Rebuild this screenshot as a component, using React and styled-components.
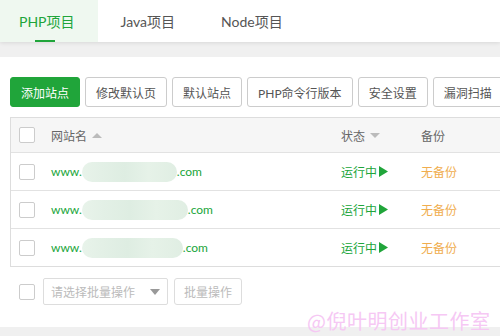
import React from "react";
import styled, { createGlobalStyle } from "styled-components";

const Global = createGlobalStyle`
  html, body { margin: 0; padding: 0; background: #f0f0f0; overflow: hidden; }
  body { font-family: "Lato", "Noto Sans CJK SC", sans-serif; }
  #root { width: 500px; height: 336px; overflow: hidden; position: relative; }
`;

const Page = styled.div`
  width: 500px;
  height: 336px;
  background: #f0f0f0;
  display: flex;
  flex-direction: column;
  position: relative;
  overflow: hidden;
`;

const TabBar = styled.div`
  height: 42px;
  background: #fff;
  display: flex;
  flex: none;
  box-shadow: 0 1px 4px rgba(0, 0, 0, 0.1);
  position: relative;
  z-index: 1;
`;

const TabList = styled.div`
  display: flex;
  margin-left: -4px;
`;

const Tab = styled.div`
  position: relative;
  padding: 0 23px;
  display: flex;
  align-items: center;
  font-size: 14px;
  color: ${(p) => (p.$active ? "#20a53a" : "#555")};
  background: ${(p) => (p.$active ? "#eff8f0" : "transparent")};
  &::after {
    content: "";
    display: ${(p) => (p.$active ? "block" : "none")};
    position: absolute;
    left: 39px;
    width: 20px;
    bottom: 0;
    height: 2px;
    background: #20a53a;
  }
`;

const Panel = styled.div`
  margin-top: 15px;
  background: #fff;
  width: 640px;
  height: 270px;
  box-sizing: border-box;
  padding: 20px 10px 0;
  display: flex;
  flex-direction: column;
  gap: 10px;
`;

const Toolbar = styled.div`
  display: flex;
  gap: 5px;
`;

const Button = styled.button`
  height: 30px;
  padding: 0 10px;
  box-sizing: border-box;
  font: inherit;
  font-size: 12px;
  border-radius: 3px;
  border: 1px solid ${(p) => (p.$primary ? "#20a53a" : "#ccc")};
  background: ${(p) => (p.$primary ? "#20a53a" : "#fff")};
  color: ${(p) => (p.$primary ? "#fff" : "#555")};
  white-space: nowrap;
  flex: none;
  cursor: pointer;
`;

const Table = styled.div`
  border: 1px solid #ddd;
  display: flex;
  flex-direction: column;
`;

const Row = styled.div`
  display: grid;
  grid-template-columns: 40px 290px 80px 1fr;
  align-items: center;
  height: ${(p) => (p.$head ? "34px" : "37px")};
  background: ${(p) => (p.$head ? "#f6f6f6" : "#fff")};
  border-bottom: 1px solid #e2e2e2;
  font-size: 12px;
  color: ${(p) => (p.$head ? "#666" : "#555")};
  &:last-child { border-bottom: none; }
`;

const Check = styled.span`
  display: block;
  width: 14px;
  height: 14px;
  border: 1px solid #ccc;
  border-radius: 2px;
  background: #fff;
  margin-left: 8px;
`;

const HeadCell = styled.div`
  display: flex;
  align-items: center;
  gap: 5px;
`;

const Sort = styled.span`
  width: 0;
  height: 0;
  border-left: 5px solid transparent;
  border-right: 5px solid transparent;
  ${(p) =>
    p.$up
      ? "border-bottom: 5px solid #bbb;"
      : "border-top: 5px solid #bbb;"}
`;

const Site = styled.div`
  display: flex;
  align-items: center;
  color: #20a53a;
`;

const Blur = styled.span`
  display: inline-block;
  height: 20px;
  border-radius: 10px;
  background: linear-gradient(
    90deg,
    #e8f3ea 0%,
    #e3f0e6 20%,
    #deede2 45%,
    #e6f2e8 70%,
    #e0eee3 100%
  );
`;

const Status = styled.div`
  display: flex;
  align-items: center;
  gap: 1px;
  color: #20a53a;
`;

const Backup = styled.div`
  color: #f0ad4e;
`;

const Footer = styled.div`
  display: flex;
  align-items: center;
  gap: 6px;
  margin-top: 1px;
  padding-left: 1px;
`;

const FooterCheck = styled(Check)`
  margin-right: 2px;
`;

const Select = styled.div`
  width: 125px;
  height: 27px;
  box-sizing: border-box;
  border: 1px solid #ddd;
  border-radius: 2px;
  display: flex;
  align-items: center;
  justify-content: space-between;
  padding: 0 7px;
  font-size: 12px;
  color: #bbb;
`;

const Caret = styled.span`
  width: 0;
  height: 0;
  border-left: 5px solid transparent;
  border-right: 5px solid transparent;
  border-top: 6px solid #999;
`;

const GhostButton = styled.div`
  height: 27px;
  box-sizing: border-box;
  border: 1px solid #ddd;
  border-radius: 3px;
  padding: 0 9px;
  display: flex;
  align-items: center;
  font-size: 12px;
  color: #bbb;
`;

const Watermark = styled.div`
  position: absolute;
  left: 307px;
  top: 306px;
  font-size: 20px;
  font-family: "Noto Sans CJK SC", sans-serif;
  color: #f6c8f4;
  white-space: nowrap;
  letter-spacing: 0.5px;
  pointer-events: none;
  z-index: 5;
`;

const Play = () => (
  <svg width="10" height="11" viewBox="0 0 10 11">
    <polygon points="1,0 10,5.5 1,11" fill="#20a53a" />
  </svg>
);

export default function App() {
  return (
    <Page>
      <Global />
      <TabBar>
        <TabList>
          <Tab $active>PHP项目</Tab>
          <Tab>Java项目</Tab>
          <Tab>Node项目</Tab>
        </TabList>
      </TabBar>
      <Panel>
        <Toolbar>
          <Button $primary>添加站点</Button>
          <Button>修改默认页</Button>
          <Button>默认站点</Button>
          <Button>PHP命令行版本</Button>
          <Button>安全设置</Button>
          <Button>漏洞扫描</Button>
        </Toolbar>
        <Table>
          <Row $head>
            <Check />
            <HeadCell>
              网站名 <Sort $up />
            </HeadCell>
            <HeadCell>
              状态 <Sort />
            </HeadCell>
            <HeadCell>备份</HeadCell>
          </Row>
          {[95, 106, 101].map((w, i) => (
            <Row key={i}>
              <Check />
              <Site>
                www.
                <Blur style={{ width: w }} />
                .com
              </Site>
              <Status>
                运行中
                <Play />
              </Status>
              <Backup>无备份</Backup>
            </Row>
          ))}
        </Table>
        <Footer>
          <FooterCheck />
          <Select>
            请选择批量操作
            <Caret />
          </Select>
          <GhostButton>批量操作</GhostButton>
        </Footer>
      </Panel>
      <Watermark>@倪叶明创业工作室</Watermark>
    </Page>
  );
}
